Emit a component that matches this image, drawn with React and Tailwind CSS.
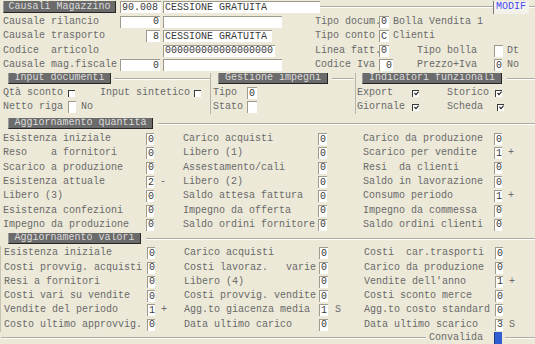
const mono = "font-['Liberation_Mono','Courier_New',monospace]"

function Box({ w, children, right }) {
  return (
    <div
      className={`${w} h-[12px] shrink-0 bg-white border-l border-t border-[#9e9b8e] text-[#3a3a3a] flex items-center whitespace-pre ${right ? 'justify-end pr-[1px]' : 'pl-[1px]'}`}
    >
      {children}
    </div>
  )
}

function Check({ on }) {
  return (
    <div className="w-[7px] h-[7px] shrink-0 bg-white border-l border-t border-[#3a3a3a] flex items-center justify-center">
      {on && (
        <svg width="5" height="5" viewBox="0 0 5 5">
          <path d="M0.5 2 L2 3.6 L4.6 0.6" stroke="#222" strokeWidth="1.2" fill="none" />
        </svg>
      )}
    </div>
  )
}

function Header({ w, children }) {
  return (
    <div
      className={`${w} h-[11px] shrink-0 bg-[#6b6b6b] text-[#dcdcdc] border-r border-b border-[#262626] border-l border-l-[#9a9a9a] flex items-center justify-center whitespace-pre`}
    >
      {children}
    </div>
  )
}

function Groove({ className = '' }) {
  return <div className={`h-[2px] border-t border-[#aeab9c] border-b border-b-white ${className}`} />
}

function Label({ w, children }) {
  return <div className={`${w} shrink-0 whitespace-pre`}>{children}</div>
}

const quantita = [
  [['Esistenza iniziale', '0', ''], ['Carico acquisti', '0', ''], ['Carico da produzione', '0', '']],
  [['Reso    a fornitori', '0', ''], ['Libero (1)', '0', ''], ['Scarico per vendite', '1', '+']],
  [['Scarico a produzione', '0', ''], ['Assestamento/cali', '0', ''], ['Resi  da clienti', '0', '']],
  [['Esistenza attuale', '2', '-'], ['Libero (2)', '0', ''], ['Saldo in lavorazione', '0', '']],
  [['Libero (3)', '0', ''], ['Saldo attesa fattura', '0', ''], ['Consumo periodo', '1', '+']],
  [['Esistenza confezioni', '0', ''], ['Impegno da offerta', '0', ''], ['Impegno da commessa', '0', '']],
  [['Impegno da produzione', '0', ''], ['Saldo ordini fornitore', '0', ''], ['Saldo ordini clienti', '0', '']],
]

const valori = [
  [['Esistenza iniziale', '0', ''], ['Carico acquisti', '0', ''], ['Costi  car.trasporti', '0', '']],
  [['Costi provvig. acquisti', '0', ''], ['Costi lavoraz.   varie', '0', ''], ['Carico da produzione', '0', '']],
  [['Resi a fornitori', '0', ''], ['Libero (4)', '0', ''], ["Vendite dell'anno", '1', '+']],
  [['Costi vari su vendite', '0', ''], ['Costi provvig. vendite', '0', ''], ['Costi sconto merce', '0', '']],
  [['Vendite del periodo', '1', '+'], ['Agg.to giacenza media', '1', 'S'], ['Agg.to costo standard', '0', '']],
  [['Costo ultimo approvvig.', '0', ''], ['Data ultimo carico', '0', ''], ['Data ultimo scarico', '3', 'S']],
]

function DataRow({ row }) {
  const [a, b, c] = row
  return (
    <div className="flex items-center h-[14.3px] pl-[3px]">
      <Label w="w-[143px]">{a[0]}</Label>
      <Box w="w-[8px]">{a[1]}</Box>
      <div className="w-[29px] shrink-0 pl-[6px]">{a[2]}</div>
      <Label w="w-[135px]">{b[0]}</Label>
      <Box w="w-[9px]">{b[1]}</Box>
      <div className="w-[36px] shrink-0 pl-[7px]">{b[2]}</div>
      <Label w="w-[131px]">{c[0]}</Label>
      <Box w="w-[8px]">{c[1]}</Box>
      <div className="shrink-0 pl-[6px]">{c[2]}</div>
    </div>
  )
}

export default function App() {
  return (
    <div className={`${mono} w-[535px] h-[344px] overflow-hidden bg-[#ece9d8] text-[#6a6a6a] text-[10px] leading-none`}>
      {/* testata */}
      <div className="pl-[3px]">
        <div className="flex items-center h-[14.5px]">
          <div className="w-[113px] h-[12px] shrink-0 bg-[#6b6b6b] text-[#dcdcdc] border-r border-b border-[#262626] border-l border-l-[#9a9a9a] flex items-center justify-center">
            Causali Magazzino
          </div>
          <div className="ml-[4px]">
            <Box w="w-[41px]">90.008</Box>
          </div>
          <div className="ml-[2px]">
            <Box w="w-[157px]">CESSIONE GRATUITA</Box>
          </div>
          <Groove className="flex-1" />
          <div className="w-[36px] h-[13px] shrink-0 bg-[#f3f2ea] border-l border-[#7a7a7a] text-[#4848f0] flex items-center pl-[2px]">
            MODIF
          </div>
          <Groove className="w-[6px]" />
        </div>

        <div className="flex items-center h-[14.5px]">
          <Label w="w-[117px]">Causale rilancio</Label>
          <Box w="w-[40px]" right>0</Box>
          <div className="ml-[3px]">
            <Box w="w-[119px]"></Box>
          </div>
          <div className="w-[33px] shrink-0" />
          <Label w="w-[64px]">Tipo docum.</Label>
          <Box w="w-[10px]">0</Box>
          <div className="ml-[4px]">Bolla Vendita 1</div>
        </div>

        <div className="flex items-center h-[14.5px]">
          <Label w="w-[143px]">Causale trasporto</Label>
          <Box w="w-[14px]" right>8</Box>
          <div className="ml-[3px]">
            <Box w="w-[109px]">CESSIONE GRATUITA</Box>
          </div>
          <div className="w-[43px] shrink-0" />
          <Label w="w-[64px]">Tipo conto</Label>
          <Box w="w-[10px]">C</Box>
          <div className="ml-[4px]">Clienti</div>
        </div>

        <div className="flex items-center h-[14.5px]">
          <Label w="w-[160px]">Codice  articolo</Label>
          <Box w="w-[112px]">000000000000000000</Box>
          <div className="w-[40px] shrink-0" />
          <Label w="w-[64px]">Linea fatt.</Label>
          <Box w="w-[10px]">0</Box>
          <div className="w-[28px] shrink-0" />
          <Label w="w-[77px]">Tipo bolla</Label>
          <Box w="w-[9px]"></Box>
          <div className="ml-[4px]">Dt</div>
        </div>

        <div className="flex items-center h-[14.5px]">
          <Label w="w-[117px]">Causale mag.fiscale</Label>
          <Box w="w-[40px]" right>0</Box>
          <div className="ml-[3px]">
            <Box w="w-[119px]"></Box>
          </div>
          <div className="w-[33px] shrink-0" />
          <Label w="w-[64px]">Codice Iva</Label>
          <Box w="w-[14px]" right>0</Box>
          <div className="w-[24px] shrink-0" />
          <Label w="w-[77px]">Prezzo+Iva</Label>
          <Box w="w-[8px]">0</Box>
          <div className="ml-[5px]">No</div>
        </div>
      </div>

      {/* riquadri */}
      <div className="flex mt-[0.5px]">
        <div className="w-[210px] shrink-0">
          <div className="flex items-center h-[11px] pl-[8px]">
            <Header w="w-[103px]">Input documenti</Header>
            <Groove className="flex-1 ml-[3px]" />
          </div>
          <div className="mt-[2px] pl-[3px]">
            <div className="flex items-center h-[14px]">
              <Label w="w-[65px]">Qtà sconto</Label>
              <Check />
              <div className="w-[25px] shrink-0" />
              <Label w="w-[94px]">Input sintetico</Label>
              <Check />
            </div>
            <div className="flex items-center h-[14px]">
              <Label w="w-[65px]">Netto riga</Label>
              <Box w="w-[8px]"></Box>
              <div className="ml-[5px]">No</div>
            </div>
          </div>
        </div>

        <div className="w-[145px] shrink-0 border-l border-[#b8b5a6]">
          <div className="flex items-center h-[11px] pl-[7px]">
            <Header w="w-[110px]">Gestione impegni</Header>
            <Groove className="flex-1 ml-[4px] mr-[1px]" />
          </div>
          <div className="mt-[2px] pl-[2px]">
            <div className="flex items-center h-[14px]">
              <Label w="w-[34px]">Tipo</Label>
              <Box w="w-[10px]">0</Box>
            </div>
            <div className="flex items-center h-[14px]">
              <Label w="w-[34px]">Stato</Label>
              <Box w="w-[10px]"></Box>
            </div>
          </div>
        </div>

        <div className="flex-1 border-l border-[#b8b5a6]">
          <div className="flex items-center h-[11px] pl-[6px]">
            <Header w="w-[140px]">Indicatori funzionali</Header>
            <Groove className="flex-1 ml-[5px]" />
          </div>
          <div className="mt-[2px] pl-[1px]">
            <div className="flex items-center h-[14px]">
              <Label w="w-[55px]">Export</Label>
              <Check on />
              <div className="w-[28px] shrink-0" />
              <Label w="w-[48px]">Storico</Label>
              <Check on />
            </div>
            <div className="flex items-center h-[14px]">
              <Label w="w-[55px]">Giornale</Label>
              <Check on />
              <div className="w-[28px] shrink-0" />
              <Label w="w-[50px]">Scheda</Label>
              <Check on />
            </div>
          </div>
        </div>
      </div>

      {/* Aggiornamento quantità */}
      <div className="mt-[4px]">
        <div className="flex items-center h-[11px] pl-[8px]">
          <Header w="w-[145px]">Aggiornamento quantità</Header>
          <Groove className="flex-1 ml-[5px]" />
        </div>
        <div className="mt-[3px]">
          {quantita.map((r, i) => (
            <DataRow key={i} row={r} />
          ))}
        </div>
      </div>

      {/* Aggiornamento valori */}
      <div className="mt-[1px]">
        <div className="flex items-center h-[11px] pl-[8px]">
          <Header w="w-[133px]">Aggiornamento valori</Header>
          <Groove className="flex-1 ml-[5px]" />
        </div>
        <div className="mt-[2px] border-l border-[#c6c3b3]">
          {valori.map((r, i) => (
            <DataRow key={i} row={r} />
          ))}
        </div>
      </div>

      <div className="flex items-center h-[12px]">
        <Groove className="w-[425px] ml-[1px]" />
        <div className="w-[68px] shrink-0 pl-[3px]">Convalida</div>
        <div className="w-[8px] h-[12px] shrink-0 bg-[#2f5fd0] border-l border-[#1b3a8a]" />
        <Groove className="flex-1 ml-[3px]" />
      </div>
    </div>
  )
}
